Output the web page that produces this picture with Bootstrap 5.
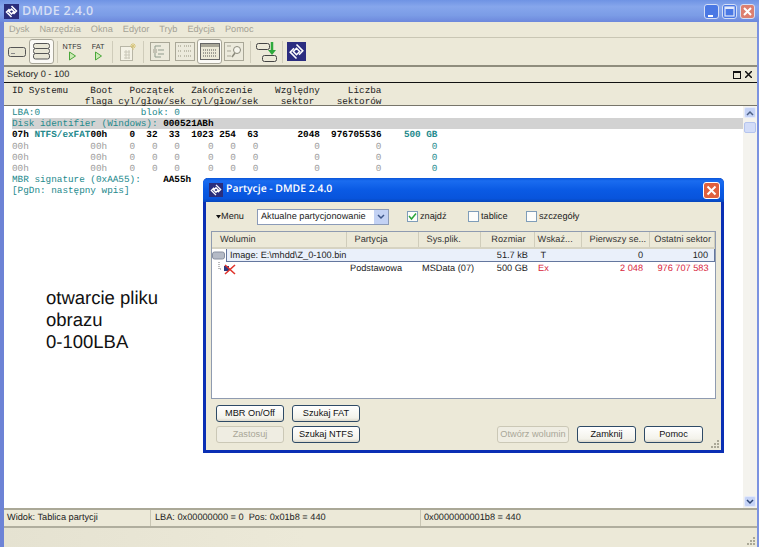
<!DOCTYPE html>
<html lang="pl">
<head>
    <meta charset="UTF-8">
    <title>DMDE 2.4.0</title>
    <link href="https://cdn.jsdelivr.net/npm/bootstrap@5.3.0/dist/css/bootstrap.min.css" rel="stylesheet">
    <style>
        html, body { height: 547px; overflow: hidden; background: #fff; }
        body { font-family: "Liberation Sans", Arial, sans-serif; font-size: 9.2px; color: #222; text-rendering: geometricPrecision; }

        /* glowne okno */
        .app-win { height: 547px; border-left: 4px solid #6d83d6; border-right: 2px solid #7c93e0; position: relative; background: #ece9d8; }
        .app-title { height: 22px; margin: 0 -2px 0 -4px; padding: 0 4px; background: linear-gradient(180deg, #6f93e4 0%, #86a6ec 30%, #7b9ce6 70%, #6d88dc 100%); }
        .app-title-text { font-family: "Open Sans", "Liberation Sans", sans-serif; font-size: 12.5px; font-weight: 600; color: #d5def5; letter-spacing: .3px; margin-left: 3px; }
        .win-btn { width: 15px; height: 15px; border: 1px solid #d5dff6; border-radius: 3px; background: #4a78e4; }
        .win-btn-close { background: #dc7f70; }
        .win-btns { gap: 3px; margin-top: 1px; }

        .app-menu { height: 16px; padding-left: 5px; gap: 10px; color: #a3a195; border-bottom: 1px solid #c9c6b4; }
        .app-tools { height: 29px; border-bottom: 2px solid #8f8d7d; }
        .tool-sep { width: 1px; height: 22px; background: #cfccba; }
        .tool-on { width: 25px; height: 25px; background: #fbfaf6; border: 1px solid #a8a698; border-radius: 3px; }
        .tool-lab { font-size: 7.2px; line-height: 9px; color: #333; width: 24px; text-align: center; }
        .tg-2 { margin-left: 2px; } .tg-3 { margin-left: 3px; } .tg-4 { margin-left: 4px; }
        .tg-5 { margin-left: 5px; } .tg-6 { margin-left: 6px; } .tg-7 { margin-left: 7px; }

        .pane-head { height: 16px; padding: 0 1px 0 3px; border-bottom: 1px solid #111; }
        .col-head { height: 23px; border-bottom: 1px solid #77756a; }
        .hex { font-family: "Liberation Mono", "Courier New", monospace; font-size: 9.33px; line-height: 11.2px; margin: 0; padding: 0 0 0 8px; color: #222; white-space: pre; overflow: visible; }
        .col-head .hex { padding-top: 2px; }
        .hex-area { background: #fff; height: 402px; }
        .hex-main { padding-top: 1px; }
        .tc { color: #23898c; }
        .tg { color: #9b9b9b; }
        .tk { color: #000; font-weight: 700; }
        .hl { display: block; background: #d2d2d2; }
        .note { font-size: 18.5px; line-height: 22px; color: #111; margin: 90px 0 0 42px; }

        .sbar { width: 14px; background: #f4f3ee; padding: 1px 1px; }
        .sbar-btn { height: 11px; background: #c5d3f6; border: 1px solid #e4eafb; border-radius: 2px; }
        .sbar-thumb { height: 11px; margin-top: 4px; background: #d2dcf8; border: 1px solid #b4c4ee; border-radius: 2px; }

        .stat-row { height: 20px; border-top: 2px solid #aaa897; border-bottom: 2px solid #b0ae9e; }
        .stat-cell { padding-left: 3px; border-right: 1px solid #c9c6b4; height: 100%; }
        .cell-a { width: 147px; padding-left: 3px; }
        .cell-b { width: 270px; padding-left: 4px; }
        .stat-foot { height: 18px; position: relative; background: linear-gradient(90deg, #e5e2d1, #ece9d8 40%); }
        .grip { position: absolute; right: 1px; bottom: 1px; }

        /* dialog partycji */
        .part-dlg { position: absolute; left: 199px; top: 178px; width: 521px; height: 275px; background: #ece9d8; border: 3px solid #0a2fb4; border-top: 0; border-radius: 5px 5px 0 0; }
        .dlg-title { height: 24px; margin: 0 -3px; padding: 0 4px 0 6px; border-radius: 5px 5px 0 0; background: linear-gradient(180deg, #0a55d8 0%, #1a6cf0 12%, #0a5ae4 50%, #0854dc 85%, #0646bc 100%); }
        .dlg-title-text { font-family: "Open Sans", "Liberation Sans", sans-serif; font-size: 10.4px; font-weight: 600; color: #fff; margin-left: 3px; }
        .dlg-close { width: 17px; height: 17px; border: 1px solid #fff; border-radius: 3px; background: #e0603e; }
        .dlg-ctrl { height: 29px; padding-left: 10px; }
        .fake-select { width: 132px; height: 16px; background: #fff; border: 1px solid #8b9bb8; padding-left: 3px; margin-left: 13px; }
        .fake-arrow { width: 14px; height: 14px; background: #c3d2f4; margin-left: auto; }
        .fake-check { width: 11px; height: 11px; background: #fdfdfb; border: 1px solid #7f9db9; margin-right: 2px; }
        .chk-a { margin-left: 18px; width: 61px; }
        .chk-b { width: 58px; }
        .part-list { height: 168px; margin: 0 5px; border: 1px solid #8f9bb0; background: #fff; }
        .part-table { table-layout: fixed; width: 100%; border-collapse: collapse; }
        .part-table th { height: 16px; font-weight: 400; background: #ece9d8; border-bottom: 2px solid #d6d3c2; border-right: 1px solid #d0cdbb; padding: 0 8px; color: #333; white-space: nowrap; overflow: hidden; }
        .part-table th.th-tight { padding-left: 3px; padding-right: 3px; }
        .part-table td { height: 13px; padding: 0 6px 0 4px; white-space: nowrap; line-height: 12px; }
        .cw-1 { width: 134px; } .cw-2 { width: 72px; } .cw-3 { width: 62px; } .cw-4 { width: 54px; } .cw-5 { width: 47px; } .cw-6 { width: 68px; }
        .row-sel td { background: #eaf0fa; border-top: 1px solid #64779e; border-bottom: 1px solid #64779e; }
        .row-sel td:first-child { background: #fff; border: 0; padding: 0; }
        .row-sel td:last-child { border-right: 1px solid #64779e; }
        .sel-name { display: block; background: #eaf0fa; border: 1px solid #64779e; border-right: 0; height: 14px; margin: -1px 0 -1px 14px; padding-left: 3px; line-height: 12px; width: calc(100% - 14px); }
        .tr-red { color: #d8243a; }
        .xp-btn { height: 17px; width: 68px; background: linear-gradient(180deg, #fff, #f3f2ea 80%, #dcd8cb); border: 1px solid #2e4a66; border-radius: 3px; padding: 0; font-size: 9.2px; color: #111; line-height: 15px; white-space: nowrap; }
        .xp-btn:disabled { border-color: #cbc8b6; background: #efede2; color: #a9a798; opacity: 1; }
        .w-open { width: 72px; } .w-std { width: 59px; }
        .dlg-btns { margin: 6px 0 0 10px; width: 487px; }
    </style>
</head>
<body>
<div class="app-win d-flex flex-column">
    <div class="app-title d-flex align-items-center">
        <svg width="15" height="15" viewBox="0 0 15 15"><rect width="15" height="15" fill="#2a2e7c"/><path d="M7.5 2 L12.5 7 L9.5 10 M7.5 13 L2.5 8 L5.5 5 M7.5 5 L10 7.5 L7.5 10 L5 7.5Z" fill="none" stroke="#fff" stroke-width="1.5"/></svg>
        <span class="app-title-text">DMDE 2.4.0</span>
        <div class="win-btns d-flex ms-auto">
            <div class="win-btn d-flex align-items-end justify-content-center"><svg width="9" height="9"><rect x="1" y="6" width="5" height="2" fill="#fff"/></svg></div>
            <div class="win-btn d-flex align-items-center justify-content-center"><svg width="11" height="11"><rect x="1" y="1" width="9" height="9" fill="none" stroke="#e3e9fa" stroke-width="1.2"/><rect x="1" y="1" width="9" height="2" fill="#e3e9fa"/></svg></div>
            <div class="win-btn win-btn-close d-flex align-items-center justify-content-center"><svg width="11" height="11"><path d="M2 2 L9 9 M9 2 L2 9" stroke="#fff" stroke-width="2"/></svg></div>
        </div>
    </div>

    <div class="app-menu d-flex align-items-center">
        <span>Dysk</span><span>Narzędzia</span><span>Okna</span><span>Edytor</span><span>Tryb</span><span>Edycja</span><span>Pomoc</span>
    </div>

    <div class="app-tools d-flex align-items-center">
        <svg class="tg-4" width="18" height="10"><rect x=".5" y=".5" width="17" height="9" rx="2" fill="#e6e4d2" stroke="#555"/><rect x="3" y="6" width="4" height="1" fill="#888"/></svg>
        <div class="tool-on d-flex align-items-center justify-content-center tg-3">
            <svg width="17" height="17"><g fill="#e8e6d6" stroke="#555"><rect x=".5" y=".5" width="16" height="5" rx="2"/><rect x=".5" y="5.5" width="16" height="5" rx="2"/><rect x=".5" y="10.5" width="16" height="5.5" rx="2"/></g></svg>
        </div>
        <div class="tool-sep tg-3"></div>
        <div class="d-flex flex-column align-items-center tg-2">
            <div class="tool-lab">NTFS</div>
            <svg width="9" height="10"><path d="M1.5 1 L7.5 5 L1.5 9Z" fill="#cdeab5" stroke="#49a63a"/></svg>
        </div>
        <div class="d-flex flex-column align-items-center tg-2">
            <div class="tool-lab">FAT</div>
            <svg width="9" height="10"><path d="M1.5 1 L7.5 5 L1.5 9Z" fill="#cdeab5" stroke="#49a63a"/></svg>
        </div>
        <div class="tool-sep tg-2"></div>
        <svg class="tg-7" width="17" height="19"><rect x=".5" y="4.5" width="12" height="14" fill="#f4f2e6" stroke="#b8b6a6"/><path d="M4 10h6M4 13h6M4 16h6M6 8v9M9 8v9" stroke="#c9c7b8"/><path d="M13 1v7M10 4h6M11 2l4 4M15 2l-4 4" stroke="#d8c67a"/></svg>
        <div class="tool-sep tg-6"></div>
        <svg class="tg-6" width="20" height="19"><rect x=".5" y=".5" width="19" height="18" fill="#eceadc" stroke="#a9a797"/><path d="M5 4h6M8 8h6M8 12h6M5 15h6M5 4v11" stroke="#8f9b8d"/><rect x="3" y="7" width="4" height="4" fill="#c4c2b4"/></svg>
        <svg class="tg-5" width="20" height="19"><rect x=".5" y=".5" width="19" height="18" fill="#eceadc" stroke="#a9a797"/><path d="M3 4h4M3 9h4M3 14h4M9 4h8M9 9h8M9 14h8" stroke="#94927f" stroke-dasharray="1 1"/></svg>
        <div class="tool-on d-flex align-items-center justify-content-center tg-2">
            <svg width="20" height="17"><rect x=".5" y=".5" width="19" height="16" fill="#ece9d8" stroke="#666"/><rect x="1" y="1" width="18" height="3" fill="#a8a698"/><path d="M3 7h14M3 10h14M3 13h14" stroke="#555" stroke-dasharray="1 1"/></svg>
        </div>
        <svg class="tg-2" width="20" height="19"><rect x=".5" y=".5" width="19" height="18" fill="#eceadc" stroke="#a9a797"/><path d="M3 4h4M3 9h4M3 14h4" stroke="#a9a797"/><circle cx="13" cy="8" r="3.5" fill="#f6f5ec" stroke="#8b8a7c"/><path d="M11 11 L8 15" stroke="#8b8a7c" stroke-width="1.5"/></svg>
        <div class="tool-sep tg-6"></div>
        <svg class="tg-5" width="21" height="22"><rect x=".5" y="2.5" width="13" height="6" rx="2" fill="#ece9d8" stroke="#444"/><rect x="6.5" y="14.5" width="14" height="6" rx="2" fill="#ece9d8" stroke="#444"/><path d="M16 1v9" stroke="#2eaa3c" stroke-width="2.5"/><path d="M12 9 L16 14 L20 9Z" fill="#2eaa3c"/></svg>
        <div class="tool-sep tg-5"></div>
        <svg class="tg-4" width="19" height="19" viewBox="0 0 15 15"><rect width="15" height="15" fill="#2b2d80"/><path d="M7.5 2 L12.5 7 L9.5 10 M7.5 13 L2.5 8 L5.5 5 M7.5 5 L10 7.5 L7.5 10 L5 7.5Z" fill="none" stroke="#fff" stroke-width="1.2"/></svg>
    </div>

    <div class="pane-head d-flex align-items-center">
        <span>Sektory 0 - 100</span>
        <svg class="ms-auto" width="8" height="8"><rect x=".5" y=".5" width="7" height="7" fill="none" stroke="#111"/><rect width="8" height="2" fill="#111"/></svg>
        <svg class="ms-1 me-1" width="7" height="7"><path d="M0 0 L7 7 M7 0 L0 7" stroke="#111" stroke-width="1.5"/></svg>
    </div>
    <div class="col-head"><pre class="hex">ID Systemu    Boot   Początek   Zakończenie    Względny     Liczba
             flaga cyl/głow/sek cyl/głow/sek    sektor    sektorów</pre></div>

    <div class="hex-area d-flex">
        <div class="flex-grow-1">
<pre class="hex hex-main"><span class="tc">LBA:0                  blok: 0</span>
<span class="hl"><span class="tc">Disk identifier (Windows):</span> <span class="tk">000521ABh</span></span><span class="tk">07h <span class="tc">NTFS/exFAT</span>00h    0  32  33  1023 254  63       2048  976705536    <span class="tc">500 GB</span></span>
<span class="tg">00h           00h    0   0   0     0   0   0          0          0         <span class="tc">0</span></span>
<span class="tg">00h           00h    0   0   0     0   0   0          0          0         <span class="tc">0</span></span>
<span class="tg">00h           00h    0   0   0     0   0   0          0          0         <span class="tc">0</span></span>
<span class="tc">MBR signature (0xAA55):</span>    <span class="tk">AA55h</span>
<span class="tc">[PgDn: następny wpis]</span></pre>
            <div class="note">otwarcie pliku<br>obrazu<br>0-100LBA</div>
        </div>
        <div class="sbar d-flex flex-column">
            <div class="sbar-btn d-flex align-items-center justify-content-center"><svg width="8" height="6"><path d="M1 5 L4 2 L7 5" fill="none" stroke="#4d6185" stroke-width="1.5"/></svg></div>
            <div class="sbar-thumb"></div>
            <div class="sbar-btn mt-auto d-flex align-items-center justify-content-center"><svg width="8" height="6"><path d="M1 1 L4 4 L7 1" fill="none" stroke="#2d4575" stroke-width="1.5"/></svg></div>
        </div>
    </div>

    <div class="stat-row d-flex align-items-center">
        <div class="stat-cell d-flex align-items-center cell-a">Widok: Tablica partycji</div>
        <div class="stat-cell d-flex align-items-center cell-b">LBA: 0x00000000 = 0&nbsp; Pos: 0x01b8 = 440</div>
        <div class="stat-cell d-flex align-items-center flex-grow-1 border-0">0x0000000001b8 = 440</div>
    </div>
    <div class="stat-foot flex-grow-1">
        <svg class="grip" width="10" height="10"><g fill="#aaa897"><rect x="7" y="1" width="2" height="2"/><rect x="4" y="4" width="2" height="2"/><rect x="7" y="4" width="2" height="2"/><rect x="1" y="7" width="2" height="2"/><rect x="4" y="7" width="2" height="2"/><rect x="7" y="7" width="2" height="2"/></g></svg>
    </div>

    <!-- okno dialogowe nad reszta -->
    <div class="part-dlg d-flex flex-column">
        <div class="dlg-title d-flex align-items-center">
            <svg width="14" height="14" viewBox="0 0 15 15"><rect width="15" height="15" fill="#2a2e7c"/><path d="M7.5 2 L12.5 7 L9.5 10 M7.5 13 L2.5 8 L5.5 5 M7.5 5 L10 7.5 L7.5 10 L5 7.5Z" fill="none" stroke="#fff" stroke-width="1.4"/></svg>
            <span class="dlg-title-text">Partycje - DMDE 2.4.0</span>
            <div class="dlg-close ms-auto d-flex align-items-center justify-content-center"><svg width="11" height="11"><path d="M1.5 1.5 L9.5 9.5 M9.5 1.5 L1.5 9.5" stroke="#fff" stroke-width="2"/></svg></div>
        </div>
        <div class="dlg-ctrl d-flex align-items-center">
            <svg width="5" height="4"><path d="M0 0 H5 L2.5 3.5Z" fill="#111"/></svg>
            <span>Menu</span>
            <div class="fake-select d-flex align-items-center">
                <span>Aktualne partycjonowanie</span>
                <div class="fake-arrow d-flex align-items-center justify-content-center"><svg width="8" height="6"><path d="M1 1 L4 4 L7 1" fill="none" stroke="#3d5688" stroke-width="1.5"/></svg></div>
            </div>
            <div class="d-flex align-items-center chk-a">
                <div class="fake-check d-flex align-items-center justify-content-center"><svg width="9" height="9"><path d="M1 4 L3.5 7 L8 1.5" fill="none" stroke="#2aa63a" stroke-width="1.5"/></svg></div><span>znajdź</span>
            </div>
            <div class="d-flex align-items-center chk-b"><div class="fake-check"></div><span>tablice</span></div>
            <div class="d-flex align-items-center"><div class="fake-check"></div><span>szczegóły</span></div>
        </div>
        <div class="part-list">
            <table class="part-table">
                <colgroup><col class="cw-1"><col class="cw-2"><col class="cw-3"><col class="cw-4"><col class="cw-5"><col class="cw-6"><col></colgroup>
                <thead>
                    <tr><th>Wolumin</th><th>Partycja</th><th>Sys.plik.</th><th class="text-end">Rozmiar</th><th class="th-tight">Wskaź...</th><th class="text-end">Pierwszy se...</th><th class="text-end th-tight">Ostatni sektor</th></tr>
                </thead>
                <tbody>
                    <tr class="row-sel">
                        <td colspan="3">
                            <svg class="float-start" width="13" height="12"><rect x=".5" y="3" width="12" height="7" rx="2" fill="#b4bac6" stroke="#8890a0"/></svg>
                            <span class="sel-name">Image: E:\mhdd\Z_0-100.bin</span>
                        </td>
                        <td class="text-end">51.7 kB</td><td>&nbsp;T</td><td class="text-end">0</td><td class="text-end">100</td>
                    </tr>
                    <tr>
                        <td><svg width="24" height="13"><path d="M3 0v7h3" fill="none" stroke="#777" stroke-dasharray="1 1"/><rect x="8" y="4" width="5" height="5" fill="#2c3a80"/><path d="M9 3 L19 12 M19 3 L9 12" stroke="#e0342c" stroke-width="1.6"/></svg></td>
                        <td>Podstawowa</td><td>MSData (07)</td><td class="text-end">500 GB</td><td class="tr-red">Ex</td><td class="text-end tr-red">2 048</td><td class="text-end tr-red">976 707 583</td>
                    </tr>
                </tbody>
            </table>
        </div>
        <div class="dlg-btns d-flex gap-2 align-items-start">
            <div class="d-flex flex-column gap-1">
                <button class="xp-btn">MBR On/Off</button>
                <button class="xp-btn" disabled>Zastosuj</button>
            </div>
            <div class="d-flex flex-column gap-1">
                <button class="xp-btn">Szukaj FAT</button>
                <button class="xp-btn">Szukaj NTFS</button>
            </div>
            <div class="d-flex gap-2 ms-auto align-self-end">
                <button class="xp-btn w-open" disabled>Otwórz wolumin</button>
                <button class="xp-btn w-std">Zamknij</button>
                <button class="xp-btn w-std">Pomoc</button>
            </div>
        </div>
        <svg class="grip" width="10" height="10"><g fill="#aaa897"><rect x="7" y="1" width="2" height="2"/><rect x="4" y="4" width="2" height="2"/><rect x="7" y="4" width="2" height="2"/><rect x="1" y="7" width="2" height="2"/><rect x="4" y="7" width="2" height="2"/><rect x="7" y="7" width="2" height="2"/></g></svg>
    </div>
</div>
<script src="https://cdn.jsdelivr.net/npm/bootstrap@5.3.0/dist/js/bootstrap.bundle.min.js"></script>
</body>
</html>
